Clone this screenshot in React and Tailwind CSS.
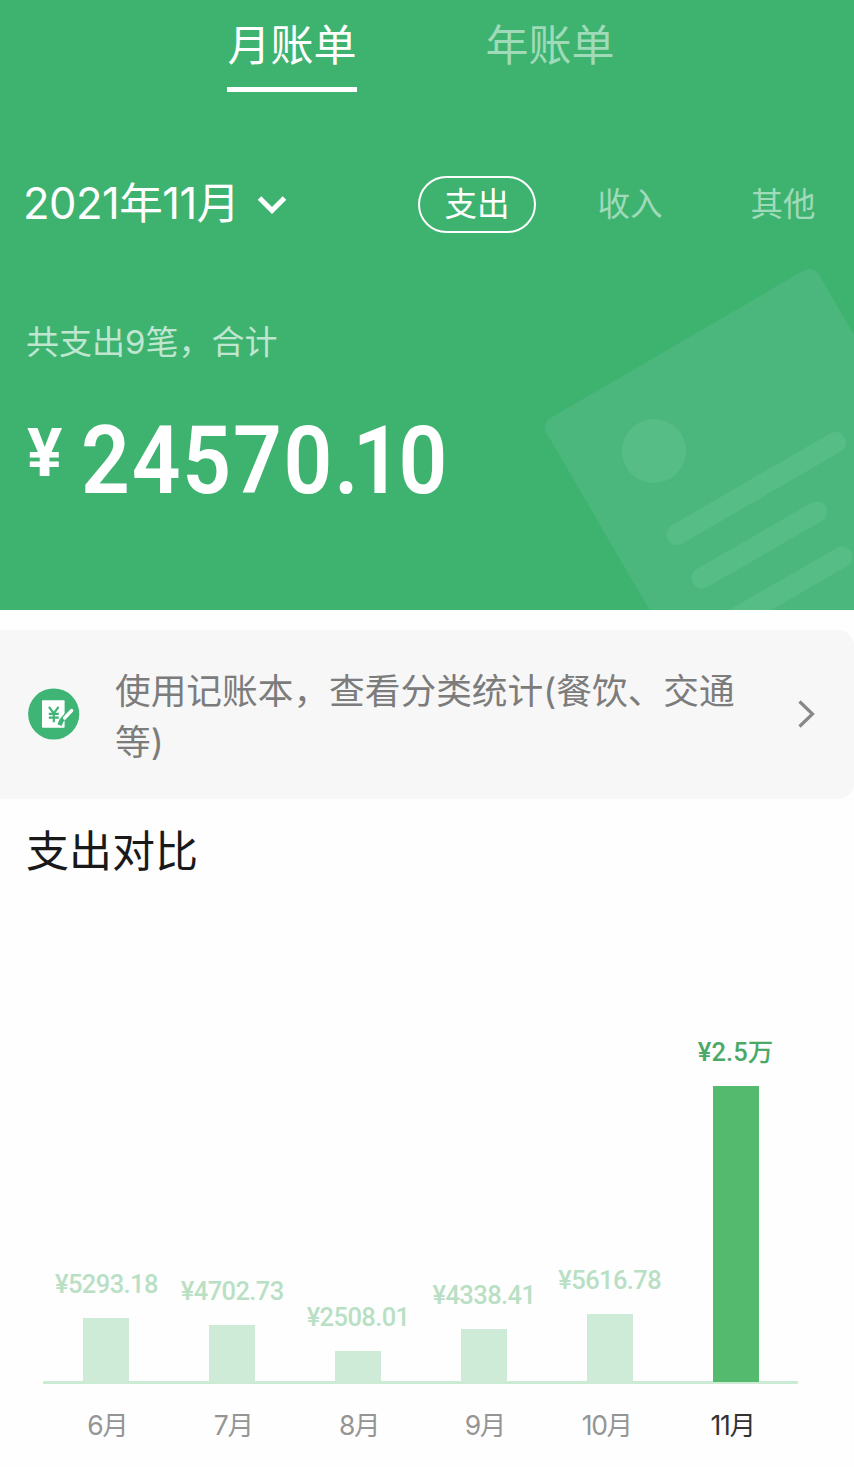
import { useState } from "react";

const months = [
  { name: "6月", label: "¥5293.18", height: 64 },
  { name: "7月", label: "¥4702.73", height: 57 },
  { name: "8月", label: "¥2508.01", height: 31 },
  { name: "9月", label: "¥4338.41", height: 53 },
  { name: "10月", label: "¥5616.78", height: 68 },
  { name: "11月", label: "¥2.5万", height: 296 },
];

const tabs = ["月账单", "年账单"];
const types = ["支出", "收入", "其他"];

const PaperArt = () => (
  <svg
    className="absolute bottom-0 right-0"
    width="324"
    height="360"
    viewBox="530 250 324 360"
    fill="none"
  >
    <rect
      width="315"
      height="420"
      rx="11"
      transform="translate(541 423.5) rotate(-30.2)"
      fill="#4bb77c"
    />
    <circle cx="654" cy="451" r="32" fill="#57bd86" />
    <g stroke="#57bd86" strokeWidth="21" strokeLinecap="round">
      <path d="M677 534.5 835.5 442.5" />
      <path d="M702 578 816.5 512" />
      <path d="M730 621.5 842 557" />
    </g>
  </svg>
);

const BookIcon = () => (
  <svg
    className="relative -top-[1px]"
    width="52"
    height="52"
    viewBox="0 0 52 52"
    fill="none"
  >
    <circle cx="25.7" cy="26" r="25.6" fill="#3eb575" />
    <rect x="14" y="12.3" width="22.6" height="27.4" rx="1" fill="#fff" />
    <path
      d="M21 18.8l4.8 6.6 4.8-6.6M20.8 25.8h10M20.8 29.6h10M25.8 25.4v8.8"
      stroke="#3eb575"
      strokeWidth="2.2"
    />
    <path d="M31.5 37.2 33.5 32.5 41 24" stroke="#3eb575" strokeWidth="4.5" />
    <path d="M36.6 30 43.6 22.6" stroke="#fff" strokeWidth="3.4" strokeLinecap="round" />
  </svg>
);

const Header = () => {
  const [tab, setTab] = useState(0);
  const [type, setType] = useState(0);

  return (
    <header className="relative h-[609.5px] overflow-hidden bg-[#3eb370] text-white">
      <PaperArt />
      <div className="relative">
        <div className="flex h-[92px] gap-[128px] pl-[227px] text-[43px]">
          {tabs.map((item, i) => (
            <button
              key={item}
              onClick={() => setTab(i)}
              className={`w-[130px] whitespace-nowrap border-b-[5px] pt-[4px] leading-[83px] ${
                tab === i ? "border-white" : "border-transparent text-[#9fdab9]"
              }`}
            >
              {item}
            </button>
          ))}
        </div>

        <div className="mt-[84px] flex h-[57px] items-center pl-[24px]">
          <button className="flex w-[394px] items-center whitespace-nowrap">
            <span className="-mt-[3px] -ml-[1px] text-[43.5px] leading-[57px] tracking-[-0.5px]">
              2021年11月
            </span>
            <svg className="ml-[17px]" width="30" height="20" viewBox="0 0 30 20" fill="none">
              <path d="M2.5 3 15 15.5 27.5 3" stroke="#fff" strokeWidth="5" />
            </svg>
          </button>
          <div className="flex text-[32.5px]">
            {types.map((item, i) => (
              <button
                key={item}
                onClick={() => setType(i)}
                className={`h-[57px] w-[118px] whitespace-nowrap rounded-full border-2 leading-[51px] ${
                  i > 0 ? "ml-[35px]" : ""
                } ${type === i ? "border-white" : "border-transparent text-[#9fdab9]"}`}
              >
                {item}
              </button>
            ))}
          </div>
        </div>

        <p className="mt-[85px] pl-[26px] text-[33px] leading-[48px] text-[#bfe6d0]">
          共支出9笔，合计
        </p>
        <div className="mt-[44px] flex items-start pl-[27px] font-[Roboto] font-semibold">
          <span className="mt-[11px] w-[54px] text-[66px] font-bold leading-[66px]">¥</span>
          <span className="origin-left scale-x-90 text-[95px] leading-[102px] tracking-[2px]">
            24570<span className="tracking-[-6.4px]">.</span>
            <span className="tracking-[-3.5px]">1</span>0
          </span>
        </div>
      </div>
    </header>
  );
};

const BookCard = () => (
  <div className="mt-[20.5px] flex h-[169px] items-center rounded-r-[16px] bg-[#f7f7f7] pl-[28px]">
    <BookIcon />
    <p className="ml-[35px] w-[640px] pt-[4px] text-[35.7px] leading-[51px] text-[#7c7c7c]">
      使用记账本，查看分类统计(餐饮、交通等)
    </p>
    <svg className="-mt-[2px] ml-[41px]" width="22" height="30" viewBox="0 0 22 30" fill="none">
      <path d="M3.5 2.5 16.5 15 3.5 27.5" stroke="#888" strokeWidth="3.2" />
    </svg>
  </div>
);

const Chart = () => (
  <div className="mx-[43px] w-[755px]">
    <div className="flex h-[509px] items-end border-b-[3px] border-[#cbebd5]">
      {months.map((month, i) => (
        <div key={month.name} className="flex flex-1 flex-col items-center pl-[1px]">
          <span
            className={`mb-[17px] whitespace-nowrap text-[25.5px] leading-[34px] font-medium font-[Roboto,'Noto_Sans_CJK_SC',sans-serif] ${
              i === 5
                ? "tracking-[0.1px] text-[#4ba968]"
                : "tracking-[-0.6px] text-[#b9dfc4]"
            }`}
          >
            {month.label}
          </span>
          <div
            className={`-mb-[1px] w-[46px] ${i === 5 ? "bg-[#54bb6e]" : "bg-[#cdebd6]"}`}
            style={{ height: month.height }}
          />
        </div>
      ))}
    </div>
    <div className="mt-[21px] flex text-[26.5px] leading-[40px] tracking-[-1.3px]">
      {months.map((month, i) => (
        <span
          key={month.name}
          className={`w-1/6 text-center ${i === 5 ? "text-[#333]" : "text-[#959595]"} ${
            i < 4 ? "pl-[3px]" : "pr-[5px]"
          }`}
        >
          {month.name}
        </span>
      ))}
    </div>
  </div>
);

const App = () => {
  return (
    <div className="h-[1467px] w-[854px] overflow-hidden bg-[#fefefe] font-[Inter,'Noto_Sans_CJK_SC',sans-serif]">
      <Header />
      <BookCard />
      <h2 className="h-[76px] pl-[26px] pt-[20px] text-[43px] leading-[64px] text-[#191919]">
        支出对比
      </h2>
      <Chart />
    </div>
  );
};

export default App;
